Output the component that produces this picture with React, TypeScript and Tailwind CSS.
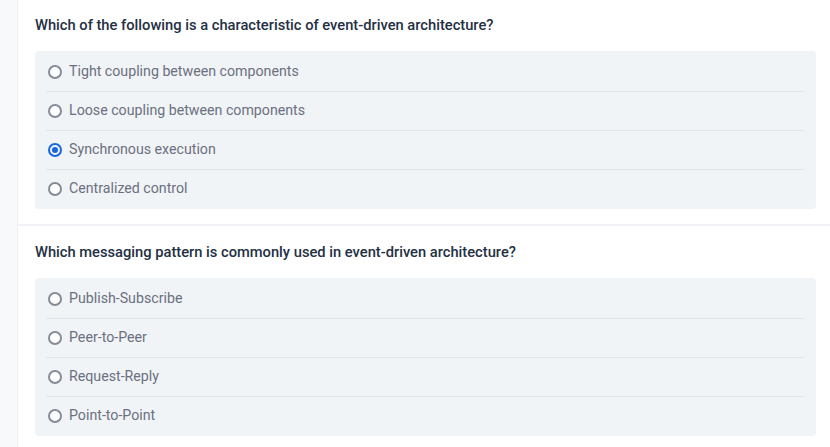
const questions = [
  {
    text: "Which of the following is a characteristic of event-driven architecture?",
    options: [
      "Tight coupling between components",
      "Loose coupling between components",
      "Synchronous execution",
      "Centralized control",
    ],
    selected: 2,
  },
  {
    text: "Which messaging pattern is commonly used in event-driven architecture?",
    options: ["Publish-Subscribe", "Peer-to-Peer", "Request-Reply", "Point-to-Point"],
    selected: -1,
  },
]

function Radio({ checked }: { checked: boolean }) {
  if (checked) {
    return (
      <span className="w-[14px] h-[14px] rounded-full border-2 border-[#1a66e0] flex items-center justify-center shrink-0">
        <span className="w-[6px] h-[6px] rounded-full bg-[#1a66e0]" />
      </span>
    )
  }
  return <span className="w-[14px] h-[14px] rounded-full border-2 border-[#878b96] bg-white shrink-0" />
}

export default function App() {
  return (
    <div className="flex w-[830px] h-[447px] overflow-hidden bg-white font-['Roboto',sans-serif]">
      {/* left rail */}
      <div className="w-[18px] shrink-0 bg-[#f8f9fb] border-r border-[#eef0f4]" />

      <div className="flex-1">
        {questions.map((q, qi) => (
          <div
            key={qi}
            className={
              qi === 0
                ? "pl-[17px] pr-[14px] pt-[15px] pb-[15px] border-b-2 border-[#f1f2f5]"
                : "pl-[17px] pr-[14px] pt-[16px] pb-[16px]"
            }
          >
            <p className="text-[14.7px] leading-[20px] font-medium text-[#243044] mb-[16px]">{q.text}</p>
            <div className="bg-[#f1f4f7] rounded-[4px] pt-[2px] pb-[1px]">
              <div className="mx-[11px]">
                {q.options.map((opt, i) => (
                  <label
                    key={opt}
                    className={
                      i === 0
                        ? "flex items-center gap-[7px] pl-[2px] h-[38px]"
                        : "flex items-center gap-[7px] pl-[2px] h-[39px] border-t border-[#e2e6eb]"
                    }
                  >
                    <Radio checked={i === q.selected} />
                    <span className="text-[14.2px] text-[#6b7080]">{opt}</span>
                  </label>
                ))}
              </div>
            </div>
          </div>
        ))}
      </div>
    </div>
  )
}
